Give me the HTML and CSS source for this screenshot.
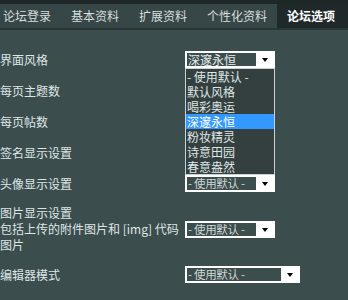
FILE: index.html
```html
<!DOCTYPE html>
<html lang="zh-CN">
<head>
    <meta charset="UTF-8">
    <meta name="viewport" content="width=device-width, initial-scale=1.0">
    <title>论坛选项</title>
    <link rel="stylesheet" href="styles.css">
</head>
<body>

    <!-- Top strip -->
    <div class="top-strip"></div>

    <!-- Tabs -->
    <ul class="tabs">
        <li class="tab">论坛登录</li>
        <li class="tab">基本资料</li>
        <li class="tab">扩展资料</li>
        <li class="tab">个性化资料</li>
        <li class="tab tab-active">论坛选项</li>
    </ul>

    <!-- Options form -->
    <div class="options">
        <div class="row">
            <div class="label">界面风格</div>
            <div class="field">
                <div class="select select-open">
                    <span class="select-value">深邃永恒</span>
                    <span class="select-arrow"></span>
                    <ul class="select-list">
                        <li>- 使用默认 -</li>
                        <li>默认风格</li>
                        <li>喝彩奥运</li>
                        <li class="selected">深邃永恒</li>
                        <li>粉妆精灵</li>
                        <li>诗意田园</li>
                        <li>春意盎然</li>
                    </ul>
                </div>
            </div>
        </div>
        <div class="row">
            <div class="label">每页主题数</div>
        </div>
        <div class="row">
            <div class="label">每页帖数</div>
        </div>
        <div class="row">
            <div class="label">签名显示设置</div>
        </div>
        <div class="row">
            <div class="label">头像显示设置</div>
            <div class="field">
                <div class="select">
                    <span class="select-value">- 使用默认 -</span>
                    <span class="select-arrow"></span>
                </div>
            </div>
        </div>
        <div class="row row-tall">
            <div class="label">图片显示设置<br>包括上传的附件图片和 [img] 代码<br>图片</div>
            <div class="field">
                <div class="select">
                    <span class="select-value">- 使用默认 -</span>
                    <span class="select-arrow"></span>
                </div>
            </div>
        </div>
        <div class="row">
            <div class="label">编辑器模式</div>
            <div class="field">
                <div class="select select-wide">
                    <span class="select-value">- 使用默认 -</span>
                    <span class="select-arrow"></span>
                </div>
            </div>
        </div>
    </div>

</body>
</html>
```

FILE: styles.css
```css
body {
    margin: 0;
    background-color: #3c4d4d;
    font-family: "Noto Sans CJK SC", "Noto Sans", sans-serif;
    font-size: 12px;
    color: #dfe6e6;
    overflow: hidden;
}

.top-strip {
    height: 4px;
    background-color: #1f2828;
}

/* Tab bar */
.tabs {
    display: flex;
    margin: 0;
    padding: 0;
    list-style: none;
    height: 24px;
    background-color: #374747;
    border-bottom: 2px solid #2b3636;
}

.tab {
    padding: 0 10px;
    line-height: 24px;
    color: #d6dddd;
    white-space: nowrap;
}

.tab:first-child {
    margin-left: -7px;
}

.tab-active {
    flex: 1;
    background-color: #1f2929;
    color: #ffffff;
    font-weight: bold;
}

/* Option rows */
.options {
    padding-top: 14px;
}

.row {
    display: flex;
    align-items: center;
    min-height: 31px;
}

.row-tall {
    padding: 6px 0;
}

.label {
    width: 185px;
    line-height: 15px;
    white-space: nowrap;
}

.row-tall .label {
    line-height: 16px;
}

.field {
    flex: 1;
}

/* Old style select box */
.select {
    position: relative;
    display: flex;
    width: 86px;
    height: 13px;
    border: 2px solid #ffffff;
    background-color: #ffffff;
}

.select-wide {
    width: 111px;
}

.select-value {
    flex: 1;
    background-color: #3c4d4d;
    color: #cdd6d6;
    font-size: 11.5px;
    line-height: 13px;
    padding-left: 1px;
    letter-spacing: -0.3px;
    white-space: nowrap;
}

.select-open .select-value {
    font-size: 12px;
    color: #e4ebeb;
    letter-spacing: 0;
}

.select-arrow {
    width: 17px;
    position: relative;
}

.select-arrow::after {
    content: "";
    position: absolute;
    left: 6px;
    top: 5px;
    border-top: 4px solid #000000;
    border-left: 3.5px solid transparent;
    border-right: 3.5px solid transparent;
}

/* Dropdown list over the rows below */
.select-list {
    position: absolute;
    top: 15px;
    left: -2px;
    width: 88px;
    margin: 0;
    padding: 0;
    list-style: none;
    background-color: #34403f;
    border: 1px solid #c9d1d1;
    z-index: 2;
}

.select-list li {
    height: 15px;
    line-height: 15px;
    padding-left: 1px;
    color: #dfe6e6;
    white-space: nowrap;
}

.select-list .selected {
    background-color: #3399ff;
    color: #ffffff;
}
```
